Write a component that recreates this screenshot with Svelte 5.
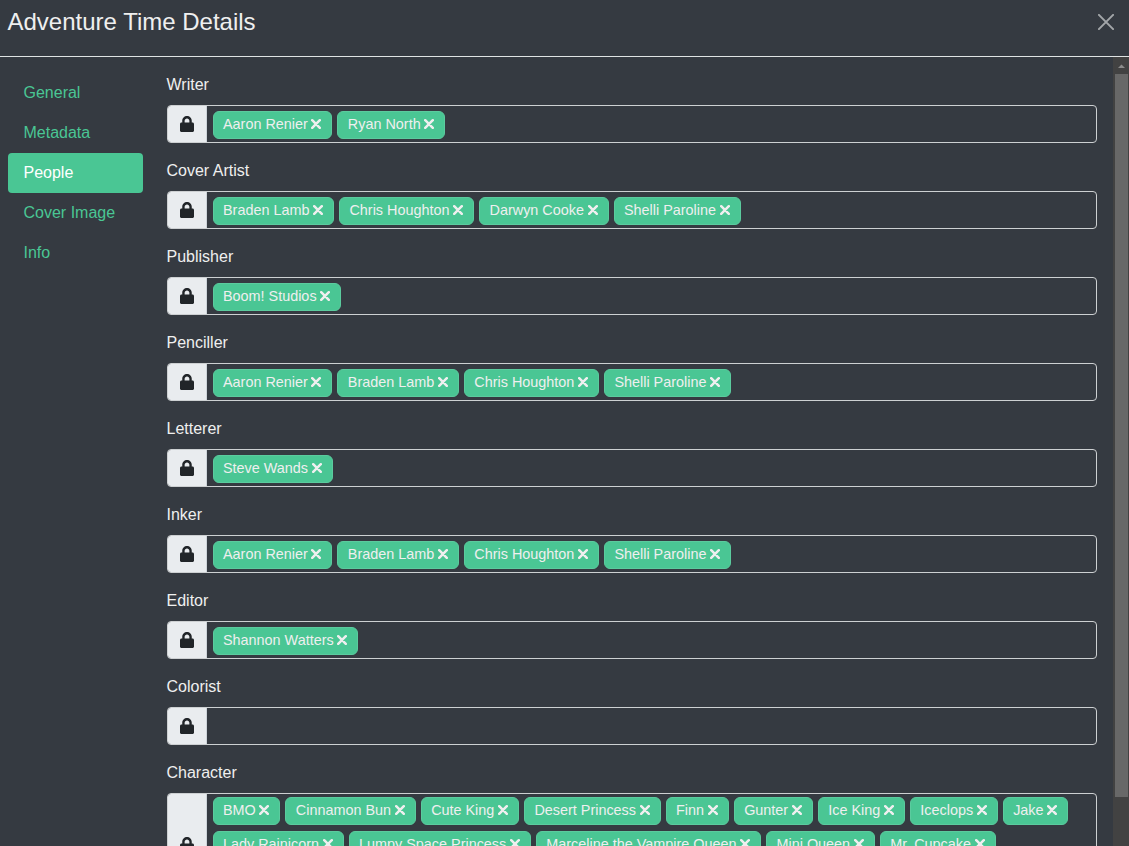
<script>
  const tabs = ['General', 'Metadata', 'People', 'Cover Image', 'Info'];
  let active = $state('People');
  const fields = [
    { label: 'Writer', people: ['Aaron Renier', 'Ryan North'] },
    { label: 'Cover Artist', people: ['Braden Lamb', 'Chris Houghton', 'Darwyn Cooke', 'Shelli Paroline'] },
    { label: 'Publisher', people: ['Boom! Studios'] },
    { label: 'Penciller', people: ['Aaron Renier', 'Braden Lamb', 'Chris Houghton', 'Shelli Paroline'] },
    { label: 'Letterer', people: ['Steve Wands'] },
    { label: 'Inker', people: ['Aaron Renier', 'Braden Lamb', 'Chris Houghton', 'Shelli Paroline'] },
    { label: 'Editor', people: ['Shannon Watters'] },
    { label: 'Colorist', people: [] },
    {
      label: 'Character',
      multi: true,
      people: ['BMO', 'Cinnamon Bun', 'Cute King', 'Desert Princess', 'Finn', 'Gunter', 'Ice King', 'Iceclops', 'Jake',
        'Lady Rainicorn', 'Lumpy Space Princess', 'Marceline the Vampire Queen', 'Mini Queen', 'Mr. Cupcake']
    }
  ];
</script>

<div class="modal">
  <header>
    <h4>Adventure Time Details</h4>
    <button class="close" aria-label="Close">
      <svg viewBox="0 0 16 16" width="16" height="16"><path d="M.9.9l14.2 14.2M15.100.9L.9 15.100" fill="none" stroke="#a3a6a9" stroke-width="2" stroke-linecap="round" /></svg>
    </button>
  </header>
  <div class="body">
    <nav>
      {#each tabs as tab}
        <button class="tab" class:active={tab === active} onclick={() => (active = tab)}>{tab}</button>
      {/each}
    </nav>
    <main>
      {#each fields as field}
        <section>
          <div class="label">{field.label}</div>
          <div class="group" class:multi={field.multi}>
            <span class="lock">
              <svg viewBox="0 0 448 512" width="14" height="16"><path fill="#212529" d="M400 208h-24v-56C376 68.200 307.800 0 224 0S72 68.200 72 152v56H48c-26.500 0-48 21.500-48 48v208c0 26.500 21.500 48 48 48h352c26.500 0 48-21.500 48-48V256c0-26.500-21.500-48-48-48zm-100 0H148v-56c0-41.900 34.100-76 76-76s76 34.100 76 76v56z" /></svg>
            </span>
            <div class="chips">
              {#each field.people as person}
                <span class="chip">
                  <span>{person}</span>
                  <svg viewBox="0 0 10 10" width="10" height="10"><path d="M1.200 1.200l7.600 7.600M8.800 1.200L1.200 8.800" fill="none" stroke="#efefef" stroke-width="2.500" stroke-linecap="round" /></svg>
                </span>
              {/each}
            </div>
          </div>
        </section>
      {/each}
    </main>
    <div class="scrollbar">
      <svg viewBox="0 0 16 17" width="16" height="17"><path d="M5 11h7L8.500 7.500z" fill="#8b8b8b" /></svg>
      <div class="thumb"></div>
    </div>
  </div>
</div>

<style>
  :global(body) { margin: 0; background: #343a40; overflow: hidden; }
  .modal {
    width: 1129px; height: 846px; overflow: hidden;
    display: flex; flex-direction: column;
    background: #353a41; color: #efefef;
    font: 16px/24px "Liberation Sans", Arial, sans-serif;
  }
  * { box-sizing: border-box; }
  header {
    flex: none; height: 57px; padding: 7px 15px 0 7.500px;
    display: flex; justify-content: space-between; align-items: flex-start;
    border-bottom: 1px solid #dfe3e3;
  }
  h4 { margin: 0; font-size: 24px; line-height: 29px; font-weight: 400; }
  button { border: 0; background: none; font: inherit; }
  .close { padding: 7px 0 0; }
  .close svg { display: block; }
  .body { flex: 1; min-height: 0; display: flex; }
  nav { width: 143px; padding: 16px 0 0 8px; display: flex; flex-direction: column; }
  .tab { height: 40px; padding: 8px 15.500px; text-align: left; color: #4ac694; border-radius: 4px; }
  .tab.active { background: #4ac694; color: #fff; }
  main { flex: 1; padding: 16px 16px 0 24px; }
  section { margin-bottom: 16px; }
  .label { margin: 0 0 8px -.5px; }
  .group {
    display: flex; min-height: 38px;
    border: 1px solid #cdd0d2; border-radius: 4px; overflow: hidden;
  }
  .lock {
    flex: none; width: 39px; padding-right: 1px; display: flex; align-items: center; justify-content: center;
    background: #e9ecef; border-right: 1px solid #ced4da;
  }
  .chips { flex: 1; display: flex; flex-wrap: wrap; align-content: flex-start; gap: 6px 5.100px; padding: 5px 6px 3px 5.600px; }
  .multi { min-height: 104px; }
  .multi .chips { padding-top: 3px; }
  .chip {
    height: 28px; padding: 0 10px 2px 9.400px; display: flex; align-items: center; gap: 3.600px;
    font-size: 14.400px; line-height: 22px; white-space: nowrap;
    background: #4ac694; border: 1px solid #5bcb9e; border-radius: 6px;
  }
  .scrollbar { width: 16px; background: #424242; }
  .scrollbar svg { display: block; }
  .thumb { width: 13px; height: 723px; margin-left: 2px; background: #686868; }
</style>
